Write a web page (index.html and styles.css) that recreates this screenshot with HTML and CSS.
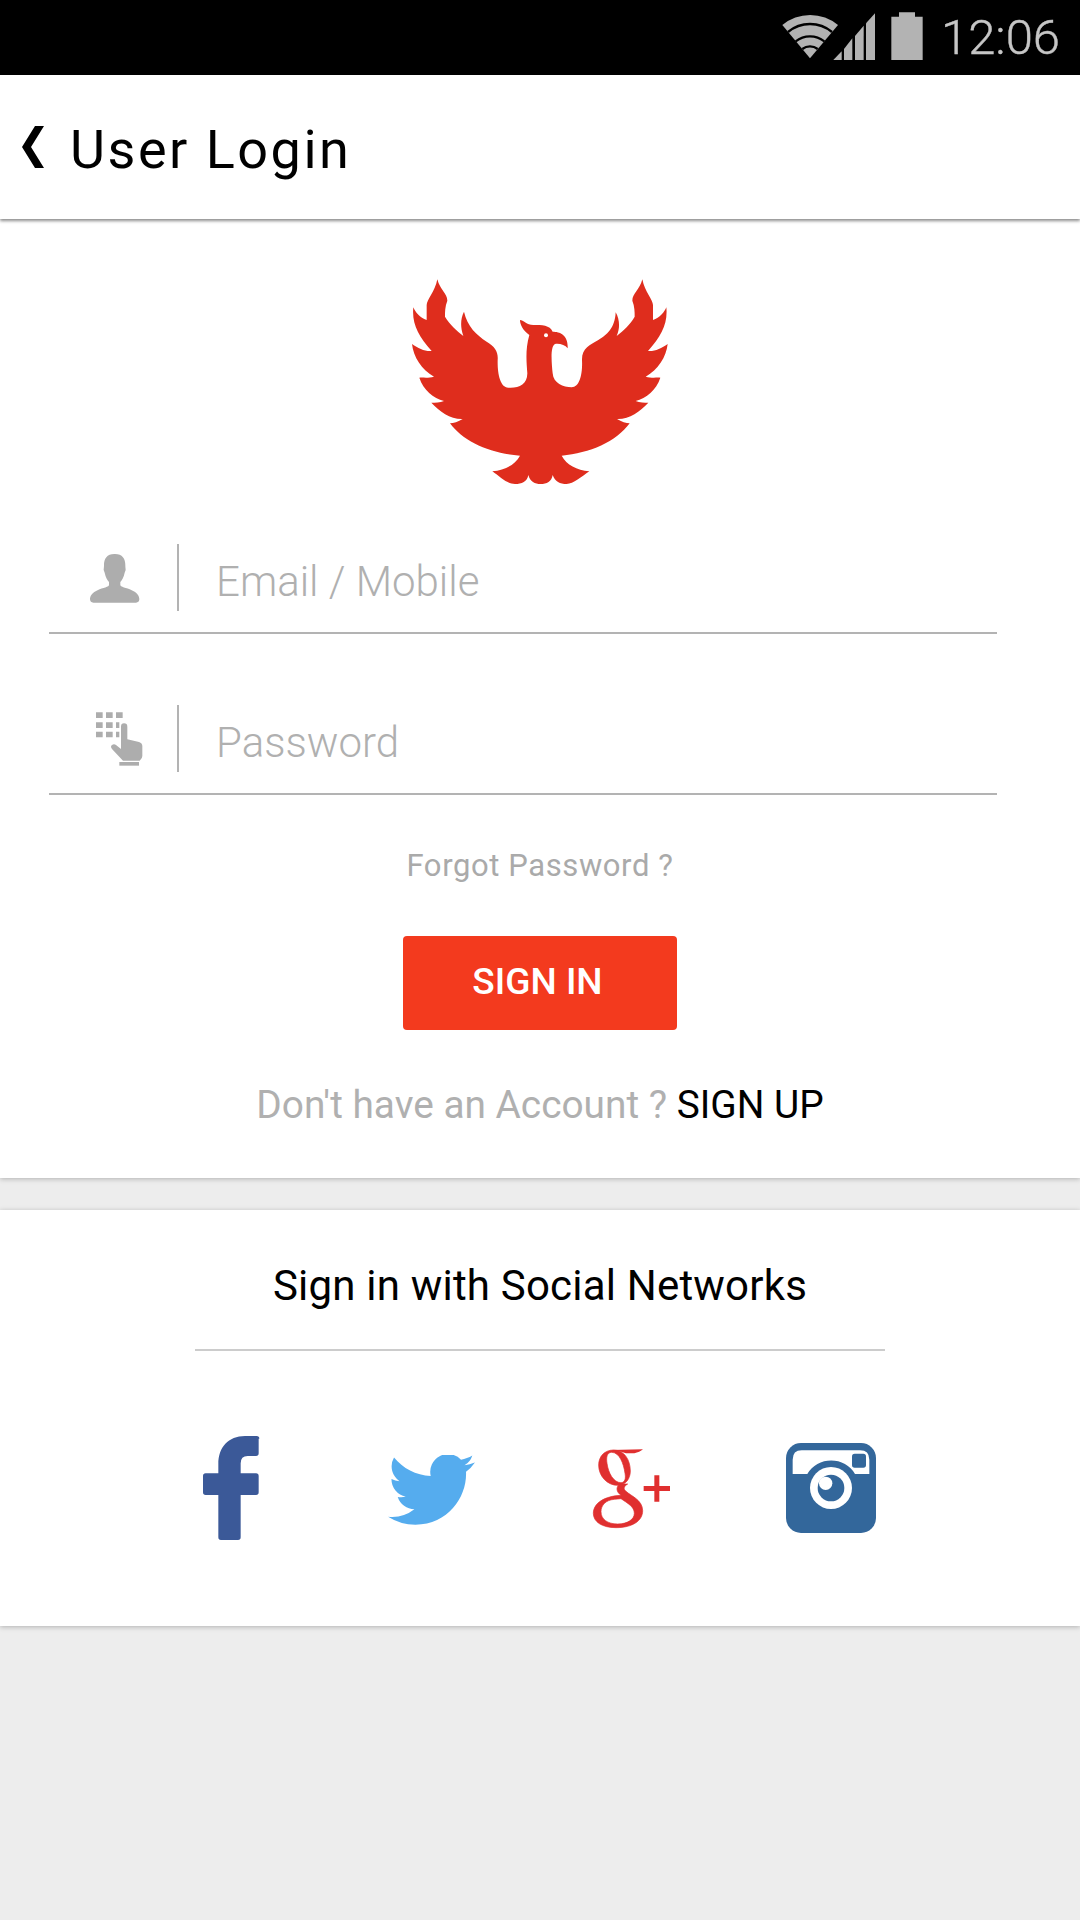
FILE: index.html
```html
<!DOCTYPE html>
<html lang="en">
<head>
  <meta charset="UTF-8">
  <meta name="viewport" content="width=device-width, initial-scale=1.0">
  <title>User Login</title>
  <link rel="stylesheet" href="styles.css">
</head>
<body>
  <div class="status-bar">
    <svg class="status-icons" width="145" height="75" viewBox="120 0 435 225">
      <!-- wifi -->
      <path class="gray" d="M213 175 L130 75 A130 130 0 0 1 297 75 Z"/>
      <path class="wifi-gap" d="M147 96 A103 103 0 0 1 279 96 M170 124 A70 70 0 0 1 256 124 M190 147 A37 37 0 0 1 236 147"/>
      <!-- signal -->
      <polygon class="gray" points="283,180 308,154 308,180"/>
      <polygon class="gray" points="315,147 340,115 340,180 315,180"/>
      <polygon class="gray" points="348,108 374,77 374,180 348,180"/>
      <polygon class="gray" points="381,70 408,40 408,180 381,180"/>
      <!-- battery -->
      <path class="gray" d="M480 37 h48 v13 h23 v130 h-94 v-130 h23 z"/>
    </svg>
    <span class="clock">12:06</span>
  </div>

  <header class="toolbar">
    <svg class="back" width="24" height="44" viewBox="0 0 24 44">
      <polygon points="14,1 23,1 10,22 23,43 14,43 1,22"/>
    </svg>
    <h1>User Login</h1>
  </header>

  <section class="card login">
    <svg class="logo" width="300" height="240" viewBox="0 0 900 720">
      <path d="M142 58 C150 90 172 100 172 122 C165 140 165 155 165 170 C180 195 200 212 220 228 C210 200 212 175 222 155 C232 200 260 225 290 245 C315 260 325 275 323 300 C322 340 330 382 355 383 C385 385 412 375 412 340 C410 310 405 270 418 225 C400 212 390 195 390 180 C400 180 410 195 430 195 C455 195 480 195 488 215 C510 215 535 225 533 265 C525 255 510 250 495 252 C480 260 485 310 488 340 C490 370 520 382 545 382 C570 382 578 340 576 300 C575 265 600 255 625 240 C650 225 675 205 677 157 C690 180 690 205 680 228 C700 212 720 195 734 170 C734 155 734 140 727 122 C727 100 749 90 757 58 C764 95 789 120 789 135 L789 180 C809 175 824 155 829 142 C834 190 814 230 774 273 C794 275 814 265 833 252 C829 290 804 330 767 350 C784 355 799 352 811 353 C799 390 769 415 737 423 C749 428 764 428 775 428 C749 455 719 478 681 477 C694 485 709 490 719 490 C679 545 599 580 515 587 C530 615 560 630 598 634 C575 650 550 672 530 672 C510 672 495 665 488 645 C485 665 470 672 452 672 C435 672 420 665 415 645 C412 665 395 672 375 672 C350 672 330 650 307 634 C345 630 375 615 390 587 C300 580 220 545 180 490 C190 490 205 485 218 477 C180 478 150 455 124 428 C135 428 150 428 162 423 C130 415 100 390 88 353 C100 352 115 355 132 350 C95 330 70 290 66 252 C85 265 105 275 125 273 C85 230 65 190 70 142 C75 155 90 175 110 180 L110 135 C110 120 135 95 142 58 Z"/>
      <circle class="logo-eye" cx="468" cy="226" r="6"/>
    </svg>

    <div class="field first">
      <svg class="field-icon" width="128" height="67" viewBox="27 42 384 201">
        <path d="M223 72 c-22 0 -31 14 -31 34 c0 6 -1 12 -1 14 l3 8 c3 14 8 22 13 28 v10 c-5 8 -25 8 -40 18 c-12 6 -17 16 -17 24 c0 6 4 10 10 10 h128 c6 0 10 -4 10 -10 c0 -8 -5 -18 -17 -24 c-15 -10 -35 -10 -40 -18 v-10 c5 -6 10 -14 13 -28 l3 -8 c0 -2 -1 -8 -1 -14 c0 -20 -9 -34 -31 -34z"/>
      </svg>
      <span class="field-label">Email / Mobile</span>
    </div>

    <div class="field">
      <svg class="field-icon" width="128" height="67" viewBox="27 525 384 201">
        <path d="M168 547 h20 v17 h-20z M198 547 h20 v17 h-20z M228 547 h20 v17 h-20z M168 577 h20 v17 h-20z M198 577 h20 v17 h-20z M228 577 h10 v17 h-10z M168 605 h20 v17 h-20z M198 605 h20 v17 h-20z M228 605 h10 v17 h-10z"/>
        <path d="M243 590 q0 -10 9 -10 q10 0 10 10 v38 l35 8 q10 3 10 12 v30 q0 8 -8 14 h-50 l-33 -35 q-6 -8 0 -12 q6 -4 12 0 l15 12 z"/>
        <path d="M238 696 h59 v11 h-59z"/>
      </svg>
      <span class="field-label">Password</span>
    </div>

    <a class="forgot" href="#">Forgot Password ?</a>
    <button class="sign-in">SIGN IN</button>
    <p class="signup">Don't have an Account ? <a href="#">SIGN UP</a></p>
  </section>

  <section class="card social">
    <h2>Sign in with Social Networks</h2>
    <div class="social-icons">
      <svg class="fb-icon" width="100" height="100" viewBox="3 86 300 300">
        <path class="fb" d="M236 88 v44 q0 8 -8 8 h-25 q-21 0 -21 22 v30 h46 q8 0 8 8 v49 q0 8 -8 8 h-46 v127 q0 8 -8 8 h-51 q-8 0 -8 -8 v-127 h-38 q-8 0 -8 -8 v-49 q0 -8 8 -8 h38 v-28 c0 -50 30 -84 80 -84 h35 q8 0 8 8z"/>
      </svg>
      <svg class="tw-icon" width="87" height="72" viewBox="0 2.5 24 19.9">
        <path class="tw" d="M23.953 4.57a10 10 0 01-2.825.775 4.958 4.958 0 002.163-2.723c-.951.555-2.005.959-3.127 1.184a4.92 4.92 0 00-8.384 4.482C7.69 8.095 4.067 6.13 1.64 3.162a4.822 4.822 0 00-.666 2.475c0 1.71.87 3.213 2.188 4.096a4.904 4.904 0 01-2.228-.616v.06a4.923 4.923 0 003.946 4.827 4.996 4.996 0 01-2.212.085 4.936 4.936 0 004.604 3.417 9.867 9.867 0 01-6.102 2.105c-.39 0-.779-.023-1.17-.067a13.995 13.995 0 007.557 2.209c9.053 0 13.998-7.496 13.998-13.985 0-.21 0-.42-.015-.63A9.935 9.935 0 0024 4.59z"/>
      </svg>
      <svg width="100" height="100" viewBox="30 84 300 300">
        <path class="gp gp-line" fill-rule="evenodd" d="M128 120 C100 120 83 140 83 165 C83 200 110 226 140 226 C165 226 178 205 178 183 C178 150 160 120 128 120 Z M122 127 C108 127 105 142 108 160 C112 190 128 218 150 218 C162 218 165 205 162 190 C158 160 145 127 122 127 Z"/>
        <path class="gp" d="M120 120 L216 118 C210 124 200 128 190 130 L165 130 L150 125 Z"/>
        <path class="gp gp-line" fill-rule="evenodd" d="M150 256 C100 258 67 280 67 310 C67 335 92 353 135 353 C185 353 215 332 215 302 C215 270 180 258 165 244 C155 236 160 228 170 222 L145 222 C135 232 135 245 150 256 Z M130 268 C105 270 90 285 90 305 C90 328 110 342 140 342 C170 342 190 328 190 310 C190 290 170 280 150 266 Z"/>
        <path class="gp" d="M218 228 h79 v15 h-79z M250 196 h15 v79 h-15z"/>
      </svg>
      <svg width="90" height="90" viewBox="648 100 270 270">
        <rect class="ig" x="648" y="100" width="270" height="270" rx="45"/>
        <path class="ig-white" d="M668 193 V150 Q668 122 695 122 H870 Q898 122 898 150 V193 H855 A83 83 0 0 0 712 193 Z"/>
        <rect class="ig" x="846" y="132" width="42" height="42" rx="8"/>
        <circle class="ig-white" cx="783" cy="235" r="63"/>
        <circle class="ig" cx="783" cy="235" r="40"/>
        <circle class="ig-white" cx="767" cy="221" r="20"/>
      </svg>
    </div>
  </section>
</body>
</html>
```

FILE: styles.css
```css
* {
  box-sizing: border-box;
}
body {
  margin: 0;
  height: 1920px;
  overflow: hidden;
  background-color: #ededed;
  font-family: Roboto, sans-serif;
}
.status-bar {
  display: flex;
  justify-content: flex-end;
  align-items: center;
  height: 75px;
  padding-right: 20px;
  background-color: #000;
}
.status-icons {
  margin-right: 17px;
}
.status-icons .gray {
  fill: #b3b3b3;
}
.wifi-gap {
  fill: none;
  stroke: #000;
  stroke-width: 7;
}
.clock {
  color: #c6c6c6;
  font-size: 49px;
  font-weight: 300;
  -webkit-text-stroke: 0.4px #c6c6c6;
}
.toolbar {
  position: relative;
  z-index: 1;
  display: flex;
  align-items: center;
  gap: 25px;
  height: 144px;
  padding: 4px 0 0 21px;
  background-color: #fff;
  box-shadow: 0 2px 3px rgba(0, 0, 0, 0.45);
}
.back {
  fill: #000;
  margin-top: -4px;
}
.toolbar h1 {
  margin: 0;
  font-size: 54px;
  font-weight: 400;
  letter-spacing: 2.5px;
  color: #000;
}
.card {
  background-color: #fff;
  box-shadow: 0 1px 5px rgba(0, 0, 0, 0.25);
}
.login {
  height: 959px;
  padding-top: 41px;
  text-align: center;
}
.logo {
  display: block;
  margin: 0 auto 44px;
  fill: #df2d1d;
}
.logo .logo-eye {
  fill: #fff;
}
.field {
  display: flex;
  align-items: center;
  width: 948px;
  height: 90px;
  margin: 71px 0 0 49px;
  padding-bottom: 21px;
  border-bottom: 2px solid #b3b3b3;
}
.field.first {
  margin-top: 0;
}
.field-icon {
  flex-shrink: 0;
  fill: #adadad;
}
.field-label {
  height: 67px;
  line-height: 67px;
  padding: 4px 0 0 37px;
  border-left: 2px solid #b3b3b3;
  font-size: 42px;
  font-weight: 300;
  color: #b0b0b0;
}
.forgot {
  display: block;
  margin-top: 51px;
  font-size: 31px;
  letter-spacing: 0.6px;
  line-height: 40px;
  color: #aaa;
  text-decoration: none;
}
.sign-in {
  display: block;
  width: 274px;
  height: 94px;
  margin: 50px auto 0;
  padding: 0 5px 4px 0;
  border: 0;
  border-radius: 4px;
  background-color: #f33a1e;
  color: #fff;
  font-family: inherit;
  font-size: 37px;
  font-weight: 500;
}
.signup {
  margin: 51px 0 0;
  font-size: 38.8px;
  line-height: 48px;
  color: #b0b0b0;
}
.signup a {
  color: #000;
  text-decoration: none;
}
.social {
  height: 416px;
  margin-top: 32px;
  padding-top: 51px;
}
.social h2 {
  width: 690px;
  height: 90px;
  margin: 0 auto;
  border-bottom: 2px solid #ccc;
  font-size: 42px;
  font-weight: 400;
  letter-spacing: 0.2px;
  line-height: 50px;
  text-align: center;
  color: #000;
}
.social-icons {
  display: grid;
  grid-template-columns: repeat(4, 200px);
  justify-items: center;
  align-items: center;
  height: 100px;
  margin: 87px 0 0 131px;
}
.fb-icon {
  overflow: visible;
}
.tw-icon {
  margin-top: 5px;
}
.fb {
  fill: #3b5998;
}
.tw {
  fill: #55acee;
}
.gp {
  fill: #e02f2f;
}
.gp-line {
  stroke: #e02f2f;
  stroke-width: 2;
}
.ig {
  fill: #33679b;
}
.ig-white {
  fill: #fff;
}
```
